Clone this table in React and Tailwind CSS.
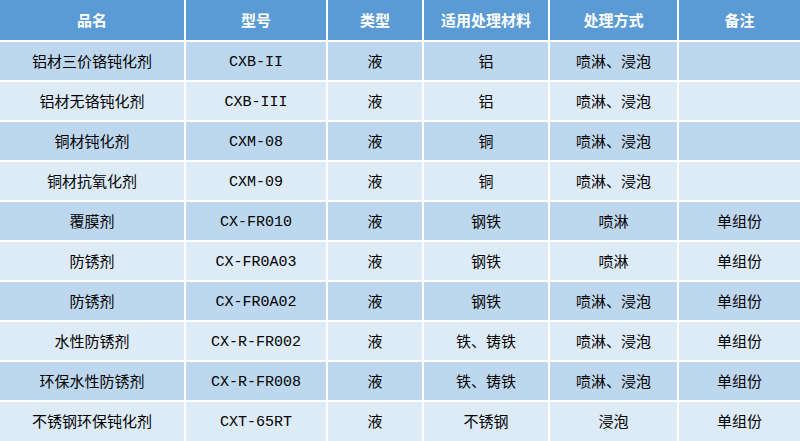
import React from "react";

const cols = ["w-[184px]", "w-[140px]", "w-[94px]", "w-[124px]", "w-[127px]", "w-[121px]"];

const header = ["品名", "型号", "类型", "适用处理材料", "处理方式", "备注"];

const rows = [
  ["铝材三价铬钝化剂", "CXB-II", "液", "铝", "喷淋、浸泡", ""],
  ["铝材无铬钝化剂", "CXB-III", "液", "铝", "喷淋、浸泡", ""],
  ["铜材钝化剂", "CXM-08", "液", "铜", "喷淋、浸泡", ""],
  ["铜材抗氧化剂", "CXM-09", "液", "铜", "喷淋、浸泡", ""],
  ["覆膜剂", "CX-FR010", "液", "钢铁", "喷淋", "单组份"],
  ["防锈剂", "CX-FR0A03", "液", "钢铁", "喷淋", "单组份"],
  ["防锈剂", "CX-FR0A02", "液", "钢铁", "喷淋、浸泡", "单组份"],
  ["水性防锈剂", "CX-R-FR002", "液", "铁、铸铁", "喷淋、浸泡", "单组份"],
  ["环保水性防锈剂", "CX-R-FR008", "液", "铁、铸铁", "喷淋、浸泡", "单组份"],
  ["不锈钢环保钝化剂", "CXT-65RT", "液", "不锈钢", "浸泡", "单组份"],
];

const cjk = "font-['SimSun','Noto_Sans_CJK_SC',sans-serif]";

export default function App() {
  return (
    <div className="w-[800px] h-[441px] bg-white flex flex-col gap-[2px] overflow-hidden">
      {/* header */}
      <div className="flex gap-[2px] h-[40px] shrink-0">
        {header.map((h, i) => (
          <div
            key={i}
            className={`${cols[i]} shrink-0 bg-[#5b9bd5] flex items-center justify-center text-white font-bold text-[15px] ${cjk}`}
          >
            {h}
          </div>
        ))}
      </div>

      {rows.map((r, ri) => (
        <div key={ri} className={`flex gap-[2px] shrink-0 ${ri === rows.length - 1 ? "h-[39px]" : "h-[38px]"}`}>
          {r.map((c, ci) => (
            <div
              key={ci}
              className={`${cols[ci]} shrink-0 flex items-center justify-center text-[15px] text-black ${
                ri % 2 === 0 ? "bg-[#bdd7ee]" : "bg-[#ddebf7]"
              } ${ci === 1 ? "font-['Liberation_Mono',monospace] text-[14px] leading-none pt-[2px]" : cjk}`}
            >
              {c}
            </div>
          ))}
        </div>
      ))}
    </div>
  );
}
